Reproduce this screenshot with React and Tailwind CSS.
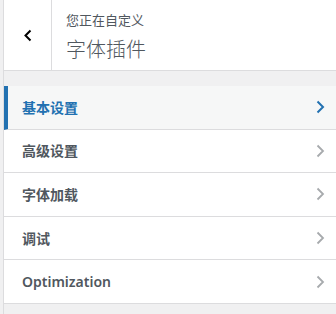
import React from 'react';

const font = { fontFamily: '"Noto Sans", "Noto Sans CJK SC", sans-serif' };

const sections = [
  { label: '基本设置', active: true },
  { label: '高级设置' },
  { label: '字体加载' },
  { label: '调试' },
  { label: 'Optimization' },
];

function Chevron({ className, strokeWidth = 2 }) {
  return (
    <svg viewBox="0 0 9 14" className={className} fill="none">
      <path d="M1.5 1.5 L7 7 L1.5 12.5" stroke="currentColor" strokeWidth={strokeWidth} />
    </svg>
  );
}

export default function App() {
  return (
    <div className="w-[336px] h-[314px] bg-[#f6f7f7] flex overflow-hidden" style={font}>
      <div className="w-[3px] shrink-0 bg-[#f0f0f1]" />
      <div className="flex-1 flex flex-col border-l border-[#dcdcde] bg-[#f0f0f1]">
        {/* Header */}
        <div className="h-[71px] flex bg-white border-b border-[#dcdcde] shrink-0">
          <button className="w-[48px] shrink-0 border-r border-[#dcdcde] flex items-center justify-center text-black">
            <svg viewBox="0 0 8 13" className="w-[8px] h-[13px]" fill="none">
              <path d="M6.5 1.5 L1.5 6.5 L6.5 11.5" stroke="currentColor" strokeWidth="2" />
            </svg>
          </button>
          <div className="pl-[14px] pt-[11px]">
            <div className="text-[13px] leading-[18px] text-[#50575e]">您正在自定义</div>
            <div className="text-[20px] leading-[28px] mt-[7px] font-light text-[#50575e]">字体插件</div>
          </div>
        </div>

        {/* Sections */}
        <div className="mt-[15px] flex flex-col">
          {sections.map((s) => (
            <div
              key={s.label}
              className={
                s.active
                  ? 'h-[43.6px] flex items-center justify-between pl-[14px] pr-[11px] bg-[#f6f7f7] border-l-4 border-l-[#2271b1] border-b border-b-[#dcdcde]'
                  : 'h-[43.6px] flex items-center justify-between pl-[18px] pr-[11px] bg-white border-b border-b-[#dcdcde]'
              }
            >
              <span
                className={
                  s.active
                    ? 'text-[14px] font-semibold text-[#2271b1]'
                    : 'text-[14px] font-semibold text-[#50575e]'
                }
              >
                {s.label}
              </span>
              {s.active ? (
                <Chevron className="w-[9px] h-[14px] text-[#2271b1]" />
              ) : (
                <Chevron className="w-[9px] h-[14px] text-[#a7aaad]" strokeWidth={1.8} />
              )}
            </div>
          ))}
        </div>
      </div>
    </div>
  );
}
